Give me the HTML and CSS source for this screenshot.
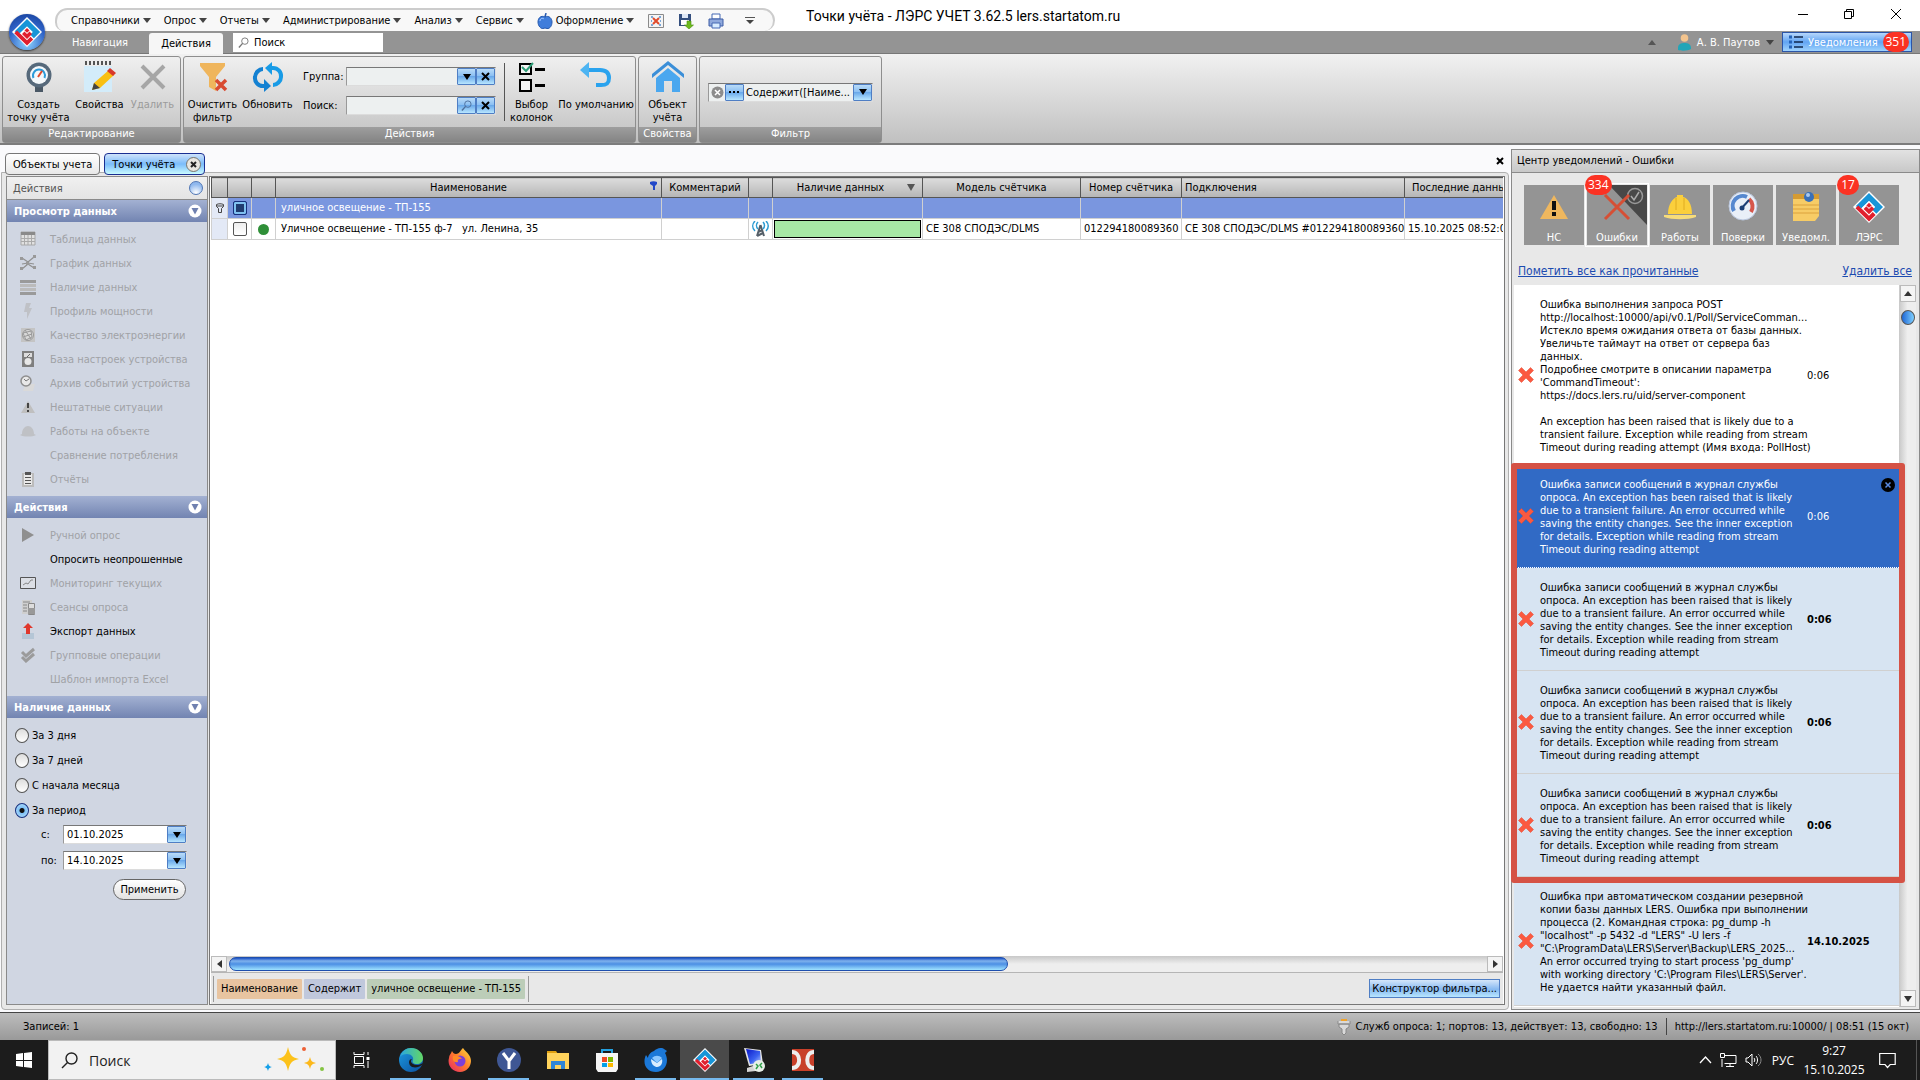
FILE: index.html
```html
<!DOCTYPE html>
<html lang="ru">
<head>
<meta charset="utf-8">
<title>Точки учёта - ЛЭРС УЧЕТ</title>
<link rel="stylesheet" href="styles.css">
</head>
<body>
<svg class="defs" aria-hidden="true">
  <defs>
    <linearGradient id="gEdge" x1="0" y1="0" x2="1" y2="1"><stop offset="0" stop-color="#1c9ae0"/><stop offset="1" stop-color="#0b4f9e"/></linearGradient>
    <linearGradient id="gEdge2" x1="0" y1="0" x2="1" y2="0"><stop offset="0" stop-color="#2aa7e0"/><stop offset="1" stop-color="#63d765"/></linearGradient>
    <linearGradient id="gFox" x1="1" y1="0" x2="0" y2="1"><stop offset="0" stop-color="#ffe03c"/><stop offset=".5" stop-color="#ff7a2c"/><stop offset="1" stop-color="#e8226a"/></linearGradient>
    <linearGradient id="gScreen" x1="0" y1="0" x2="1" y2="1"><stop offset="0" stop-color="#0a18c8"/><stop offset=".6" stop-color="#3b62f0"/><stop offset="1" stop-color="#b9c8ff"/></linearGradient>
  </defs>
  <symbol id="lers" viewBox="0 0 24 24">
    <path d="M12 0 24 12 12 24 0 12z" fill="#fff"/>
    <path d="M12 1.500 22.500 12 17.500 17 14.500 14 16.500 12 12 7.500 6.500 13 2 11.500z" fill="#1795d8"/>
    <path d="M1.800 13 4 10.800 12 18.500 14.800 15.800 17 18 12 22.800z" fill="#e01f2d"/>
    <path d="M6.500 12.800 12 7.500 16.500 12 12 16.800z" fill="#fff"/>
    <path d="M8 13.500 12 17.500 16 13.500 14 11.500 12 13.500 10 11.500z" fill="#e01f2d"/>
    <path d="M12 8.800 14 10.800 12 12.500 10 10.800z" fill="#e01f2d"/>
  </symbol>
  <symbol id="cross" viewBox="0 0 16 16"><path d="M.5 3.500 3.500.500 8 5l4.500-4.500 3 3L11 8l4.500 4.500-3 3L8 11l-4.500 4.500-3-3L5 8z" fill="#fb5940" stroke="#e04a33" stroke-width=".5"/></symbol>
  <symbol id="lens" viewBox="0 0 12 12"><circle cx="7.500" cy="4.500" r="3.500" fill="none" stroke="currentColor"/><path d="M5 7 1 11.500" stroke="currentColor" stroke-width="1.500"/></symbol>
  <symbol id="fold" viewBox="0 0 14 14"><circle cx="7" cy="7" r="6.500" fill="#fff"/><path d="M3.500 4h7L7 10.500z" fill="#6f80b0"/></symbol>
  <symbol id="helmet" viewBox="0 0 32 28"><path d="M4 21C4 11 9 5 13 4V2h6v2c5 1 9 7 9 17z" fill="#fbcf3c"/><path d="M0 22h32v2c-8 3-24 3-32 0z" fill="#f7dc7a"/><path d="M12 5v12M20 5v12" stroke="#e0ac20"/></symbol>
</svg>

<header class="titlebar">
  <span class="orb"><svg width="30" height="30"><use href="#lers"/></svg></span>
  <nav class="quick">
    <button class="menu">Справочники<i class="caret"></i></button>
    <button class="menu">Опрос<i class="caret"></i></button>
    <button class="menu">Отчеты<i class="caret"></i></button>
    <button class="menu">Администрирование<i class="caret"></i></button>
    <button class="menu">Анализ<i class="caret"></i></button>
    <button class="menu">Сервис<i class="caret"></i></button>
    <button class="menu"><svg width="16" height="16" viewBox="0 0 16 16"><path d="M8 4C4 2 1 5 1 9s3 7 5 6.500l2-.5 2 .5c3 .5 5-3 5-6.500S12 2 8 4z" fill="#3f7ddb" stroke="#2458ae"/><path d="M8 4 9 0" stroke="#2458ae" stroke-width="1.500"/><path d="M3 8c0-3 3-3 4-2" stroke="#a9cbff" fill="none"/></svg>Оформление<i class="caret"></i></button>
    <button class="tool" aria-label="Закрыть отчёт"><svg width="16" height="16" viewBox="0 0 16 16"><path d="M.5 1.500h15v13H.5z" fill="#f4f4f4" stroke="#8a8a8a"/><path d="M3 4h2M11 4h2M3 8h1M12 8h1M3 12h2M11 12h2" stroke="#7aa7d8" stroke-width="2"/><path d="m5 5 6 6M11 5l-6 6" stroke="#e04a2c" stroke-width="2"/></svg></button>
    <button class="tool" aria-label="Сохранить"><svg width="16" height="16" viewBox="0 0 16 16"><path d="M1 1h12v12H1z" fill="#35507f"/><path d="M4 1h6v4H4z" fill="#dfe8f5"/><path d="M3 7h8v5H3z" fill="#fff"/><path d="M9 8h4v4h2.500L11 16l-4.500-4H9z" fill="#6cbb1c" stroke="#4b8d0d" stroke-width=".6"/></svg></button>
    <button class="tool" aria-label="Печать"><svg width="16" height="16" viewBox="0 0 16 16"><path d="M4 1h8v5H4z" fill="#fff" stroke="#4468b4"/><path d="M1 6h14v7H1z" fill="#8fa9dc" stroke="#3d5ca5"/><path d="M4 10h8v5H4z" fill="#d8ecff" stroke="#4468b4"/></svg></button>
    <button class="tool more" aria-label="Ещё"><svg width="10" height="8" viewBox="0 0 10 8"><path d="M0 .500h10" stroke="#555"/><path d="M1 3h8L5 7z" fill="#444"/></svg></button>
  </nav>
  <h1 class="caption">Точки учёта - ЛЭРС УЧЕТ 3.62.5 lers.startatom.ru</h1>
  <div class="winbtns">
    <button aria-label="Свернуть"><svg width="10" height="10" viewBox="0 0 10 10"><path d="M0 5.500h10" stroke="#000"/></svg></button>
    <button aria-label="Восстановить"><svg width="10" height="10" viewBox="0 0 10 10"><path d="M.5 2.500h7v7h-7zM2.500 2.500v-2h7v7h-2" fill="none" stroke="#000"/></svg></button>
    <button aria-label="Закрыть"><svg width="10" height="10" viewBox="0 0 10 10"><path d="m0 0 10 10M10 0 0 10" stroke="#000"/></svg></button>
  </div>
</header>

<div class="tabstrip">
  <button class="rtab">Навигация</button>
  <button class="rtab on">Действия</button>
  <label class="find"><svg width="11" height="11"><use href="#lens"/></svg><input type="text" value="Поиск" aria-label="Поиск"></label>
  <div class="account">
    <i class="caret up"></i>
    <button class="user"><svg width="13" height="17" viewBox="0 0 13 17"><circle cx="6.500" cy="4" r="3.800" fill="#f3c48e"/><path d="M0 17v-3c0-4 3-5 6.500-5s6.500 1 6.500 5v1c-3 2-10 2-13 1z" fill="#22a5b8"/></svg>А. В. Паутов<i class="caret"></i></button>
    <button class="notify"><svg width="14" height="14" viewBox="0 0 14 14"><path d="M0 2h3M0 7h3M0 12h3" stroke="#2463b8" stroke-width="3"/><path d="M5 2h9M5 7h9M5 12h9" stroke="#10284e" stroke-width="1.500"/></svg>Уведомления<span class="pill">351</span></button>
  </div>
</div>

<div class="ribbon">
  <section class="rgroup">
    <div class="rbody">
      <button class="rbtn w70"><svg width="32" height="32" viewBox="0 0 32 32"><path d="M4 10h24v8H4z" fill="#4a5866"/><path d="M12 24h8v7h-8z" fill="#4a5866"/><circle cx="16" cy="14" r="12.500" fill="#56697b"/><circle cx="16" cy="14" r="9" fill="#f4f8fb"/><path d="M10.500 17a6 6 0 1 1 11 0" fill="none" stroke="#2d9ad8" stroke-width="2"/><path d="m15 16 4-6" stroke="#e04a2c" stroke-width="2"/></svg><span>Создать<br>точку учёта</span></button>
      <button class="rbtn w53"><svg width="32" height="32" viewBox="0 0 32 32"><path d="M0 5h28v26H0z" fill="#d3ecfa"/><path d="M1 2h26" stroke="#555" stroke-width="4" stroke-dasharray="2 2"/><path d="m8 29 2-7L25 9l5 5-14 13z" fill="#f9c013"/><path d="m8 29 2-7 6 5z" fill="#444"/><path d="m23 10 3-3 6 5-3 3z" fill="#d8392b"/></svg><span>Свойства</span></button>
      <button class="rbtn w53" disabled><svg width="32" height="32" viewBox="0 0 32 32"><path d="m5 5 22 22M27 5 5 27" stroke="#a6a6a6" stroke-width="4"/></svg><span>Удалить</span></button>
    </div>
    <h2>Редактирование</h2>
  </section>
  <section class="rgroup">
    <div class="rbody">
      <button class="rbtn w56"><svg width="32" height="32" viewBox="0 0 32 32"><path d="M3 2h25v3L19 16v14l-7-4V16L3 5z" fill="#efb55c"/><path d="m19 19 10 10M29 19 19 29" stroke="#d94a31" stroke-width="3.500"/></svg><span>Очистить<br>фильтр</span></button>
      <button class="rbtn w56"><svg width="32" height="32" viewBox="0 0 32 32"><path d="M14 25H11a8 8 0 0 1-8-9c0-4 4-8 8-8" fill="none" stroke="#1481d2" stroke-width="4"/><path d="M18 7h3a8 8 0 0 1 8 9c0 4-4 8-8 8" fill="none" stroke="#189be6" stroke-width="4"/><path d="M20 1v13l-7-7z" fill="#189be6"/><path d="M12 18v13l7-6z" fill="#1481d2"/></svg><span>Обновить</span></button>
      <div class="rform">
        <label for="grp">Группа:</label><span class="combo"><input id="grp" type="text"><button class="xp" aria-label="Открыть"><i class="tri"></i></button><button class="xp" aria-label="Очистить"><svg width="9" height="9" viewBox="0 0 9 9"><path d="m1 1 7 7M8 1 1 8" stroke="#000" stroke-width="2"/></svg></button></span>
        <label for="srch">Поиск:</label><span class="combo"><input id="srch" type="text"><button class="xp" aria-label="Найти"><svg width="11" height="11"><use href="#lens"/></svg></button><button class="xp" aria-label="Очистить"><svg width="9" height="9" viewBox="0 0 9 9"><path d="m1 1 7 7M8 1 1 8" stroke="#000" stroke-width="2"/></svg></button></span>
      </div>
      <i class="vline"></i>
      <button class="rbtn w53"><svg width="32" height="32" viewBox="0 0 32 32"><path d="M4 3h11v10H4zM4 19h11v11H4z" fill="#f4f4f4" stroke="#000" stroke-width="2"/><path d="M19 7h10v3H19zM19 23h10v3H19z"/><path d="m6 6 4 4 7-8" fill="none" stroke="#2f9e78" stroke-width="2"/></svg><span>Выбор<br>колонок</span></button>
      <button class="rbtn w76"><svg width="32" height="32" viewBox="0 0 32 32"><path d="M6 9h14c5 0 9 2 9 8s-3 7-8 7h-5" fill="none" stroke="#2aa3ee" stroke-width="4"/><path d="M9 1v16L0 9z" fill="#4db4f2"/></svg><span>По умолчанию</span></button>
    </div>
    <h2>Действия</h2>
  </section>
  <section class="rgroup">
    <div class="rbody">
      <button class="rbtn w56"><svg width="34" height="32" viewBox="0 0 34 32"><path d="M1 17v-4L17 0l16 13v4L17 4z" fill="#3b8fd8"/><path d="M5 17 17 7l12 10v14h-8V20h-8v11H5z" fill="#4aa7ef"/></svg><span>Объект<br>учёта</span></button>
    </div>
    <h2>Свойства</h2>
  </section>
  <section class="rgroup filter">
    <div class="rbody">
      <span class="combo expr"><svg width="13" height="13" viewBox="0 0 13 13"><circle cx="6.500" cy="6.500" r="6" fill="#8c8c8c"/><path d="m4 4 5 5M9 4 4 9" stroke="#fff" stroke-width="1.500"/></svg><button class="xp" aria-label="Изменить"><svg width="11" height="2" viewBox="0 0 11 2"><path d="M0 1h2M4 1h2M8 1h2" stroke="#000" stroke-width="2"/></svg></button><input type="text" value="Содержит([Наиме..." aria-label="Фильтр"><button class="xp" aria-label="Открыть"><i class="tri"></i></button></span>
    </div>
    <h2>Фильтр</h2>
  </section>
</div>

<main class="work">
  <div class="docs">
    <div class="doctabs">
      <button class="dtab">Объекты учета</button>
      <button class="dtab on">Точки учёта<svg width="15" height="15" viewBox="0 0 15 15"><circle cx="7.500" cy="7.500" r="7" fill="#e8e6e0" stroke="#77756c"/><path d="m5 5 5 5M10 5l-5 5" stroke="#222" stroke-width="2"/></svg></button>
      <button class="closeall" aria-label="Закрыть"><svg width="8" height="8" viewBox="0 0 8 8"><path d="m1 1 6 6M7 1 1 7" stroke="#000" stroke-width="2"/></svg></button>
    </div>
    <div class="docbody">
      <aside class="side">
        <div class="sidehead">Действия<i class="ball"></i></div>
        <h3>Просмотр данных<svg width="14" height="14"><use href="#fold"/></svg></h3>
        <ul class="acts">
          <li><button disabled><svg viewBox="0 0 16 16"><path d="M1 1h14v13H1z" fill="#e0e0e0" stroke="#a8a8a8"/><path d="M1 2.500h14" stroke="#8a8a8a" stroke-width="3"/><path d="M4.500 4v10M8 4v10M11.500 4v10M1 7.500h14M1 10.500h14" stroke="#aaa"/></svg>Таблица данных</button></li>
          <li><button disabled><svg viewBox="0 0 16 16"><path d="m2 3 6 4 6-5M2 14l6-5 6 4M2 9l6-1 6 1" fill="none" stroke="#909090" stroke-width="1.200"/><path d="M0 2h3v3H0zM13 0h3v3h-3zM0 12h3v3H0zM13 11h3v3h-3zM6 7h3v3H6z" fill="#999"/></svg>График данных</button></li>
          <li><button disabled><svg viewBox="0 0 16 16"><path d="M0 1h16v3H0zM0 13h16v3H0z" fill="#9a9a9a"/><path d="M0 5h16v3H0zM0 9h16v3H0z" fill="#bbb"/></svg>Наличие данных</button></li>
          <li><button disabled><svg viewBox="0 0 16 16"><path d="M6 0h5L9 5h3L7 16V9H4z" fill="#bfc1c6"/></svg>Профиль мощности</button></li>
          <li><button disabled><svg viewBox="0 0 16 16"><path d="M1 1h14v14H1z" fill="#c4c4c4"/><circle cx="8" cy="8" r="5.500" fill="#d8d8d8" stroke="#999"/><path d="m3 6 8-2 1 6-6 3zM5 3l6 9M3 10l9-3" fill="none" stroke="#999"/></svg>Качество электроэнергии</button></li>
          <li><button disabled><svg viewBox="0 0 16 16"><path d="M2 0h12v16H2z" fill="#7f7f7f"/><path d="M4 2h8v4H4z" fill="#ddd"/><circle cx="8" cy="10.500" r="3.500" fill="#e8e8e8"/><path d="m7 6 3-3" stroke="#666"/></svg>База настроек устройства</button></li>
          <li><button disabled><svg viewBox="0 0 16 16"><path d="M5 9h10l-2 7H3z" fill="#d9d9d9"/><circle cx="6" cy="6" r="5" fill="#e8e8e8" stroke="#8e8e8e" stroke-width="1.500"/><path d="m4 4 2 2 3-2" fill="none" stroke="#777"/></svg>Архив событий устройства</button></li>
          <li><button disabled><svg viewBox="0 0 16 16"><path d="m8 2 7 12H1z" fill="#bfbfbf"/><path d="M8 4v5M8 11v2" stroke="#444" stroke-width="2"/></svg>Нештатные ситуации</button></li>
          <li><button disabled><svg viewBox="0 0 16 16"><path d="M2 11c0-5 3-8 6-8s6 3 6 8l2 1c-4 2-12 2-16 0z" fill="#bfc1c5"/></svg>Работы на объекте</button></li>
          <li><button disabled><svg viewBox="0 0 16 16"></svg>Сравнение потребления</button></li>
          <li><button disabled><svg viewBox="0 0 16 16"><path d="M2 2h12v14H2z" fill="#bbb"/><path d="M4 3h8v11H4z" fill="#e8e8e8"/><path d="M5 1h6v3H5zM5 6h6v1H5zM5 9h6v1H5zM5 12h6v1H5z" fill="#555"/></svg>Отчёты</button></li>
        </ul>
        <h3>Действия<svg width="14" height="14"><use href="#fold"/></svg></h3>
        <ul class="acts">
          <li><button disabled><svg viewBox="0 0 16 16"><path d="m2 1 12 7-12 7z" fill="#8f8f8f"/></svg>Ручной опрос</button></li>
          <li><button><svg viewBox="0 0 16 16"></svg>Опросить неопрошенные</button></li>
          <li><button disabled><svg viewBox="0 0 16 16"><path d="M.5 2.500h15v11H.5z" fill="#dcdfe5" stroke="#555"/><path d="m3 10 3-2 2 1 3-4h2" fill="none" stroke="#888"/></svg>Мониторинг текущих</button></li>
          <li><button disabled><svg viewBox="0 0 16 16"><path d="M2 1h10v14H2z" fill="#cfcfcf"/><path d="M3 3h7M3 6h4M3 9h4M3 12h4" stroke="#888"/><path d="M8.500 4.500h6v11h-6z" fill="#ddd" stroke="#888"/><path d="M8 9h7v6H8z" fill="#999"/></svg>Сеансы опроса</button></li>
          <li><button><svg viewBox="0 0 16 16"><path d="M2 10h12v6H2z" fill="#b5c6d6"/><path d="m8 0 5 5h-3v6H6V5H3z" fill="#e0382d"/></svg>Экспорт данных</button></li>
          <li><button disabled><svg viewBox="0 0 16 16"><path d="m2 5 4 4 8-7M2 10l4 4 8-7" fill="none" stroke="#9b9b9b" stroke-width="3"/></svg>Групповые операции</button></li>
          <li><button disabled><svg viewBox="0 0 16 16"></svg>Шаблон импорта Excel</button></li>
        </ul>
        <h3>Наличие данных<svg width="14" height="14"><use href="#fold"/></svg></h3>
        <form class="period">
          <label><input type="radio" name="p">За 3 дня</label>
          <label><input type="radio" name="p">За 7 дней</label>
          <label><input type="radio" name="p">С начала месяца</label>
          <label><input type="radio" name="p" checked>За период</label>
          <div class="dates">
            <label for="d1">с:</label><span class="combo"><input id="d1" type="text" value="01.10.2025"><button type="button" class="xp" aria-label="Календарь"><i class="tri"></i></button></span>
            <label for="d2">по:</label><span class="combo"><input id="d2" type="text" value="14.10.2025"><button type="button" class="xp" aria-label="Календарь"><i class="tri"></i></button></span>
          </div>
          <button type="button" class="apply">Применить</button>
        </form>
      </aside>

      <section class="gridpane">
        <div class="gridwrap">
          <table>
            <colgroup><col class="c16"><col class="c24"><col class="c24"><col class="c386"><col class="c87"><col class="c24"><col class="c150"><col class="c158"><col class="c101"><col class="c223"><col class="c120"></colgroup>
            <thead><tr><th></th><th></th><th></th>
              <th><span class="hd">Наименование<svg width="7" height="9" viewBox="0 0 7 9"><path d="M0 1c2-1 5-1 7 0v2L5 5v4H3V5L0 3z" fill="#2348c8"/></svg></span></th>
              <th>Комментарий</th><th></th>
              <th><span class="hd shift">Наличие данных<i class="sort"></i></span></th>
              <th>Модель счётчика</th><th>Номер счётчика</th><th class="left">Подключения</th><th class="left wide">Последние данные</th></tr></thead>
            <tbody>
              <tr class="flt"><td class="ind"><svg width="8" height="10" viewBox="0 0 8 10"><path d="M.5 1.500c2-1 5-1 7 0v2l-2 2v4h-3v-4l-2-2zM.5 3h7" fill="none" stroke="#444"/></svg></td><td class="mid"><input type="checkbox" class="mixed" aria-label="Все"></td><td></td><td>уличное освещение - ТП-155</td><td></td><td></td><td></td><td></td><td></td><td></td><td></td></tr>
              <tr><td class="ind"></td><td class="mid"><input type="checkbox" aria-label="Строка 1"></td><td class="mid"><i class="dot"></i></td><td>Уличное освещение - ТП-155 ф-7 &nbsp; ул. Ленина, 35</td><td></td>
                <td class="mid"><svg width="17" height="16" viewBox="0 0 17 16"><path d="M8.500 4 5 15M8.500 4 12 15M6 11l5-2M5 15l6-3" fill="none" stroke="#555f68" stroke-width="2"/><path d="M6 1c-2 2-2 5 0 7M11 1c2 2 2 5 0 7M3 0C0 3 0 7 3 10M14 0c3 3 3 7 0 10" fill="none" stroke="#2d9bd2" stroke-width="1.500"/></svg></td>
                <td class="bar"><i></i></td><td class="tight">СЕ 308 СПОДЭС/DLMS</td><td class="tight">012294180089360</td><td class="tight">СЕ 308 СПОДЭС/DLMS #012294180089360</td><td class="tight">15.10.2025 08:52:00</td></tr>
            </tbody>
          </table>
        </div>
        <div class="hscroll"><button aria-label="Влево"><i class="al"></i></button><div class="track"><i class="thumb"></i></div><button aria-label="Вправо"><i class="ar"></i></button></div>
        <div class="filterbar">
          <div class="chips"><span class="chip a">Наименование</span><span class="chip b">Содержит</span><span class="chip c">уличное освещение - ТП-155</span></div>
          <button class="builder">Конструктор фильтра...</button>
        </div>
      </section>
    </div>
  </div>

  <aside class="center">
    <h2 class="chead">Центр уведомлений - Ошибки</h2>
    <div class="tiles">
      <button class="tile"><svg width="30" height="32" viewBox="0 0 30 32"><path d="m15 4 14 24H1z" fill="#efb75e"/><path d="M15 10v9M15 21v4" stroke="#111" stroke-width="4"/></svg>НС</button>
      <button class="tile on"><svg class="corner" width="38" height="40" viewBox="0 0 38 40"><path d="M0 0h38v40z" fill="#484848"/><circle cx="26" cy="11" r="7.500" fill="none" stroke="#999" stroke-width="1.500"/><path d="m22 11 3 4 5-8" fill="none" stroke="#aaa" stroke-width="1.500"/></svg><svg width="30" height="32" viewBox="0 0 30 32"><path d="m3 4 24 24M27 4 3 28" stroke="#d64f35" stroke-width="3"/></svg>Ошибки<span class="pill">334</span></button>
      <button class="tile"><svg width="32" height="32" viewBox="0 0 32 28"><use href="#helmet" width="32" height="28"/></svg>Работы</button>
      <button class="tile"><svg width="30" height="32" viewBox="0 0 30 32"><circle cx="15" cy="15" r="14" fill="#e9eff8" stroke="#b9c6de"/><path d="M6 20a10 10 0 0 1 13-14" fill="none" stroke="#5688cf" stroke-width="4"/><path d="M21 8a10 10 0 0 1 2 13" fill="none" stroke="#d6564b" stroke-width="4"/><path d="m13 18 8-9" stroke="#1d3f76" stroke-width="2"/><circle cx="14" cy="17" r="2.500" fill="#1d3f76"/></svg>Поверки</button>
      <button class="tile"><svg width="30" height="32" viewBox="0 0 30 32"><path d="M2 3h26v22l-4 5H2z" fill="#f7cc66"/><path d="M2 3h26v5H2z" fill="#d49b33"/><path d="M2 14h26M2 18h26M2 22h26" stroke="#dca23c"/><circle cx="18" cy="6" r="5" fill="#3a70b8"/><circle cx="17" cy="4" r="2" fill="#a9c9ee"/></svg>Уведомл.</button>
      <button class="tile"><svg width="32" height="32"><use href="#lers"/></svg>ЛЭРС<span class="pill">17</span></button>
    </div>
    <div class="links"><a href="#read">Пометить все как прочитанные</a><a href="#del">Удалить все</a></div>
    <div class="feed">
      <div class="msgs">
        <article class="msg read"><svg width="16" height="16"><use href="#cross"/></svg><p>Ошибка выполнения запроса POST<br>http://localhost:10000/api/v0.1/Poll/ServiceComman...<br>Истекло время ожидания ответа от базы данных.<br>Увеличьте таймаут на ответ от сервера баз<br>данных.<br>Подробнее смотрите в описании параметра<br>'CommandTimeout':<br>https://docs.lers.ru/uid/server-component<br><br>An exception has been raised that is likely due to a<br>transient failure. Exception while reading from stream<br>Timeout during reading attempt (Имя входа: PollHost)</p><time>0:06</time></article>
        <div class="marked">
          <article class="msg sel"><svg width="16" height="16"><use href="#cross"/></svg><p>Ошибка записи сообщений в журнал службы<br>опроса. An exception has been raised that is likely<br>due to a transient failure. An error occurred while<br>saving the entity changes. See the inner exception<br>for details. Exception while reading from stream<br>Timeout during reading attempt</p><time>0:06</time><button class="dismiss" aria-label="Удалить"><svg width="14" height="14" viewBox="0 0 14 14"><circle cx="7" cy="7" r="7"/><path d="m4.500 4.500 5 5M9.500 4.500l-5 5" stroke="#5a8ae0" stroke-width="1.500"/></svg></button></article>
          <article class="msg"><svg width="16" height="16"><use href="#cross"/></svg><p>Ошибка записи сообщений в журнал службы<br>опроса. An exception has been raised that is likely<br>due to a transient failure. An error occurred while<br>saving the entity changes. See the inner exception<br>for details. Exception while reading from stream<br>Timeout during reading attempt</p><time>0:06</time></article>
          <article class="msg"><svg width="16" height="16"><use href="#cross"/></svg><p>Ошибка записи сообщений в журнал службы<br>опроса. An exception has been raised that is likely<br>due to a transient failure. An error occurred while<br>saving the entity changes. See the inner exception<br>for details. Exception while reading from stream<br>Timeout during reading attempt</p><time>0:06</time></article>
          <article class="msg"><svg width="16" height="16"><use href="#cross"/></svg><p>Ошибка записи сообщений в журнал службы<br>опроса. An exception has been raised that is likely<br>due to a transient failure. An error occurred while<br>saving the entity changes. See the inner exception<br>for details. Exception while reading from stream<br>Timeout during reading attempt</p><time>0:06</time></article>
        </div>
        <article class="msg last"><svg width="16" height="16"><use href="#cross"/></svg><p>Ошибка при автоматическом создании резервной<br>копии базы данных LERS. Ошибка при выполнении<br>процесса (2. Командная строка: pg_dump -h<br>"localhost" -p 5432 -d "LERS" -U lers -f<br>"C:\ProgramData\LERS\Server\Backup\LERS_2025...<br>An error occurred trying to start process 'pg_dump'<br>with working directory 'C:\Program Files\LERS\Server'.<br>Не удается найти указанный файл.</p><time>14.10.2025</time></article>
      </div>
      <div class="vscroll"><button aria-label="Вверх"><i class="au"></i></button><i class="knob"></i><button class="down" aria-label="Вниз"><i class="ad"></i></button></div>
    </div>
  </aside>
</main>

<footer class="status">
  <span>Записей: 1</span>
  <span class="svc"><svg width="14" height="16" viewBox="0 0 14 16"><path d="M4 0h6v3H4z" fill="#f0a32c"/><path d="M1 2v3h12V2M2 5h10v3l-3 2v4l-2 2-2-2v-4L2 8z" fill="#d9d9d9" stroke="#888"/></svg>Служб опроса: 1; портов: 13, действует: 13, свободно: 13</span>
  <span class="host">http://lers.startatom.ru:10000/ | 08:51 (15 окт)</span>
</footer>

<nav class="taskbar">
  <button class="start" aria-label="Пуск"><svg width="16" height="16" viewBox="0 0 16 16"><path d="m0 2 7-1v7H0zM8 1l8-1v8H8zM0 9h7v6l-7-1zM8 9h8v7l-8-1z" fill="#fff"/></svg></button>
  <label class="tsearch"><svg width="17" height="17" viewBox="0 0 17 17"><circle cx="10.500" cy="6.500" r="5.500" fill="none" stroke="#222" stroke-width="1.400"/><path d="M6.500 10.500 1 16" stroke="#222" stroke-width="1.400"/></svg><input type="text" value="Поиск" aria-label="Поиск в Windows"><svg width="62" height="26" viewBox="0 0 62 26"><path d="M24 0c2 8 3 10 11 12-8 2-9 4-11 12-2-8-3-10-11-12 8-2 9-4 11-12z" fill="#fcc21b"/><path d="M46 10c1 4 2 5 6 6-4 1-5 2-6 6-1-4-2-5-6-6 4-1 5-2 6-6z" fill="#fcb81b"/><path d="M4 16c1 3 1 3 4 4-3 1-3 1-4 4-1-3-1-3-4-4 3-1 3-1 4-4z" fill="#16a0e8"/><circle cx="40" cy="2" r="2" fill="#ee6035"/><circle cx="58" cy="22" r="2" fill="#84c442"/></svg></label>
  <div class="apps">
    <button class="app" aria-label="Представление задач"><svg width="17" height="16" viewBox="0 0 17 16"><path d="M1 0v2.500h10V0M1 16v-2.500h10V16M1.500 4.500h9v7h-9zM15 0v3M15 9v7" fill="none" stroke="#fff"/><path d="M13.500 5h3v3h-3z" fill="#fff"/></svg></button>
    <button class="app run" aria-label="Edge"><svg width="24" height="24" viewBox="0 0 24 24"><circle cx="12" cy="12" r="12" fill="url(#gEdge)"/><path d="M1 9C3 3 7 0 12 0c7 0 12 5 12 10 0 4-3 6-6 6-4 0-5-2-4-4 1-3-2-6-6-6-3 0-6 1-7 3z" fill="url(#gEdge2)"/><path d="M24 15c-3 2-7 3-10 1-3-2-2-4-1-5-4 0-4 6 0 8 4 1 7 0 10-2z" fill="#1b1b1b"/></svg></button>
    <button class="app" aria-label="Firefox"><svg width="24" height="24" viewBox="0 0 24 24"><path d="M4 3c1 2 2 3 4 3 3 0 4-3 7-6 2 3 4 4 6 7 5 7 0 17-9 17C4 24-1 17 1 10c0-3 2-4 3-7z" fill="url(#gFox)"/><circle cx="12" cy="13" r="5.500" fill="#7d3fd8"/><path d="M5 8c4-1 8 1 9 3-3-1-5 1-4 3-4 1-6-2-5-6z" fill="#ff8a26"/></svg></button>
    <button class="app run" aria-label="Яндекс"><svg width="24" height="24" viewBox="0 0 24 24"><circle cx="12" cy="12" r="12" fill="#3f5794"/><path d="m6 5 6 8 6-8M12 12v9" fill="none" stroke="#fff" stroke-width="3"/></svg></button>
    <button class="app" aria-label="Проводник"><svg width="24" height="24" viewBox="0 0 24 24"><path d="M1 3h9l2 3H1z" fill="#e0a010"/><path d="M1 5h22v16H1z" fill="#ffd35c"/><path d="M5 13h14v8h-4v-4H9v4H5z" fill="#2f86d6"/></svg></button>
    <button class="app" aria-label="Store"><svg width="24" height="24" viewBox="0 0 24 24"><path d="M7 7V2h10v5" fill="none" stroke="#24a1e0" stroke-width="2"/><path d="M1 5h22v16l-2 3H3l-2-3z" fill="#f5f5f5"/><path d="M7 9h5v5H7z" fill="#ee4a24"/><path d="M13 9h5v5h-5z" fill="#7fb900"/><path d="M7 15h5v4H7z" fill="#00a0ea"/><path d="M13 15h5v4h-5z" fill="#fcb700"/></svg></button>
    <button class="app run" aria-label="Thunderbird"><svg width="24" height="24" viewBox="0 0 24 24"><path d="M10 3c3-3 8-4 10-2l3 2-2 2c5 9 0 19-9 19C2 24-2 15 2 7l2 3c0-3 3-6 6-7z" fill="#1b78d8"/><path d="M7 11c0 6 4 8 6 8 4 0 6-4 5-8l-5 4z" fill="#d9edff"/><path d="M8 10c3-3 7-3 10 0l-5 5z" fill="#8cc8ff"/></svg></button>
    <button class="app run active" aria-label="ЛЭРС"><svg width="24" height="24"><use href="#lers"/></svg></button>
    <button class="app run" aria-label="Удалённый рабочий стол"><svg width="24" height="24" viewBox="0 0 24 24"><path d="m2 0 17 2 2 14-14 2z" fill="#e4e4e4"/><path d="m4 1 14 2 1 12-11 1z" fill="url(#gScreen)"/><path d="m5 20 9-3v6l-9 1z" fill="#d4d4d4"/><circle cx="17" cy="18" r="6" fill="#e8efe8"/><path d="m14 16 2 2-2 3M20 15l-2 2 2 3" fill="none" stroke="#2f9f48" stroke-width="1.500"/></svg></button>
    <button class="app run" aria-label="DC"><svg width="24" height="24" viewBox="0 0 24 24"><path d="M1 1h22v22H1z" fill="#c8402a"/><path d="M1 4c9 0 10 16 0 16M23 4c-9 0-9 16 0 16" fill="none" stroke="#eee" stroke-width="4"/></svg></button>
  </div>
  <div class="tray">
    <svg width="13" height="8" viewBox="0 0 13 8"><path d="m1 7 5.500-6L12 7" fill="none" stroke="#fff" stroke-width="1.300"/></svg>
    <svg width="17" height="14" viewBox="0 0 17 14"><path d="M4 2.500h12v8H4.500M10 11v2M6 13.500h8M2 6v8" fill="none" stroke="#fff"/><path d="M.5.500h4v4h-4z" fill="#1c1c1c" stroke="#fff"/></svg>
    <svg width="17" height="14" viewBox="0 0 17 14"><path d="M1 5h2l4-4v12L3 9H1z" fill="none" stroke="#fff"/><path d="M9 5c1 1 1 3 0 4M11 3c2 2 2 6 0 8" fill="none" stroke="#fff"/><path d="M13 1c4 3 4 9 0 12" fill="none" stroke="#888"/></svg>
    <span class="lang">РУС</span>
    <span class="clock">9:27<br>15.10.2025</span>
    <svg width="17" height="17" viewBox="0 0 17 17"><path d="M.7 1.500h15.500v11h-5L8.500 15.500 6 12.500H.7z" fill="none" stroke="#fff" stroke-width="1.200"/></svg>
    <i class="peek"></i>
  </div>
</nav>
</body>
</html>
```
FILE: styles.css
```css
* { box-sizing: border-box; }
html, body { margin: 0; }
body {
  display: flex; flex-direction: column; min-height: 100vh;
  font: 11px/13px "DejaVu Sans Condensed", "DejaVu Sans", sans-serif;
  color: #000; background: #fafafc; overflow: hidden;
}
button, input { font: inherit; color: inherit; margin: 0; }
button { border: 0; padding: 0; background: none; white-space: nowrap; }
h1, h2, h3, p, ul { margin: 0; padding: 0; font-weight: normal; font-size: inherit; }
ul { list-style: none; }
svg { display: block; flex: none; }
.defs { position: absolute; width: 0; height: 0; }
.caret { display: inline-block; border: 4px solid transparent; border-top: 5px solid #444; border-bottom: 0; }
.caret.up { border-top: 0; border-bottom: 5px solid #555; }
.tri { border: 4px solid transparent; border-top: 6px solid #000; border-bottom: 0; }

/* title bar */
.titlebar { position: relative; display: flex; height: 31px; background: #fff; }
.orb {
  position: absolute; left: 9px; top: 14px; z-index: 2; width: 36px; height: 36px; border-radius: 50%;
  display: flex; align-items: center; justify-content: center;
  background: radial-gradient(circle at 50% 80%, #8fd6ff, #2f63c8 55%, #123a92);
  box-shadow: 0 1px 2px #333;
}
.quick {
  display: flex; align-items: center; gap: 13px; height: 23px; width: 720px;
  margin: 8px 0 0 55px; padding-left: 14px;
  border: 2px solid #ccc; border-bottom: 0; border-radius: 14px 14px 12px 10px; background: #f8f8f8;
}
.menu { display: flex; align-items: center; gap: 3px; }
.tool { margin-left: 1px; }
.tool.more { margin-left: 8px; }
.caption { margin-left: 31px; font: 14px/32px Roboto, sans-serif; white-space: nowrap; }
.winbtns { display: flex; margin-left: auto; }
.winbtns button { width: 46px; display: flex; justify-content: center; padding-top: 9px; }
.winbtns button:last-child { width: 48px; }

/* ribbon tabs */
.tabstrip { display: flex; height: 23px; padding-left: 51px; background: #949494; border-bottom: 1px solid #777; }
.rtab { width: 98px; color: #fff; }
.rtab.on { width: 74px; margin: 2px 0 -1px; color: #000; background: #f6f6f6; border-radius: 3px 3px 0 0; }
.find { display: flex; align-items: center; width: 150px; height: 19px; margin: 2px 0 0 10px; padding: 0 5px; gap: 5px; background: #fff; color: #777; }
.find input { border: 0; padding: 0; width: 100px; background: none; color: #000; }
.account { display: flex; align-items: center; margin-left: auto; padding-right: 8px; color: #fff; }
.user { display: flex; align-items: center; gap: 6px; margin: 0 8px 0 22px; }
.notify {
  display: flex; align-items: center; gap: 5px; height: 20px; width: 130px; padding: 0 2px 0 6px;
  border: 1px solid #2b55a8; background: linear-gradient(#b7d7fb, #62a5f3 50%, #9fd3fd);
}
.pill {
  display: flex; align-items: center; justify-content: center; min-width: 22px; height: 20px; padding: 0 3px;
  border-radius: 10px; background: #fb3223; color: #fff; font: 12px/14px "Open Sans", sans-serif;
}
.notify .pill { margin-left: auto; }

/* ribbon */
.ribbon { display: flex; gap: 2px; height: 91px; padding: 2px; background: linear-gradient(#f1f1f1, #d9d9d9 50%, #c0c0c0); border-bottom: 2px solid #7c7c7c; }
.rgroup { display: flex; flex-direction: column; height: 87px; border: 1px solid #8e8e8e; border-radius: 3px; }
.rgroup h2 { height: 15px; line-height: 14px; text-align: center; color: #fff; background: linear-gradient(#9e9e9e, #848484); }
.rbody { display: flex; flex: 1; padding: 4px 1px 0; }
.rbtn { display: flex; flex-direction: column; align-items: center; gap: 5px; height: 64px; text-align: center; }
.rbtn:disabled { color: #9b9b9b; }
.w53 { width: 53px; } .w56 { width: 55px; } .w70 { width: 69px; } .w76 { width: 76px; }
.rform { display: grid; grid-template-columns: 43px 150px; row-gap: 10px; align-content: start; align-items: center; padding: 6px 8px 0; }
.combo { display: flex; align-items: center; height: 19px; border: 1px solid #dcdcdc; border-top-color: #777; border-left-color: #999; background: #edf0f0; }
.combo input { flex: 1; min-width: 0; height: 100%; border: 0; padding: 0 3px; background: none; }
.xp {
  display: flex; align-items: center; justify-content: center; flex: none; width: 19px; height: 17px;
  border: 1px solid #4f7ec4; border-radius: 1px; background: linear-gradient(#b9dbf8, #8cc0f3 45%, #6aa9ea 50%, #b8e6ff); color: #4d6f9c;
}
.vline { width: 1px; height: 58px; margin: 2px 0 0; background: #555; }
.filter { width: 183px; }
.filter .rbody { align-items: center; padding: 0 8px; }
.expr { flex: 1; min-width: 0; gap: 1px; padding-left: 2px; }
.expr input { padding: 0 1px; }

/* work area */
.work { display: flex; flex: 1; padding: 4px 0 2px 1px; gap: 2px; }
.docs { flex: 1; min-width: 0; display: flex; flex-direction: column; }
.doctabs { display: flex; gap: 4px; height: 27px; padding: 4px 4px 0; position: relative; z-index: 1; }
.dtab { height: 22px; padding: 0 7px; border: 1px solid #777; border-radius: 4px; background: linear-gradient(#fff, #e8e8e8); }
.dtab.on { display: flex; align-items: center; gap: 11px; padding: 0 3px 0 7px; border-color: #1a2f92; background: linear-gradient(#cfe3fb, #7bbcfa 50%, #c9fbff); }
.closeall { margin-left: auto; padding: 0 1px 8px; }
.docbody { display: flex; flex: 1; margin-top: -4px; padding: 3px 3px 4px 4px; gap: 1px; border: 1px solid #b0b0b0; border-radius: 0 4px 4px 4px; background: #e8e8e8; }
.side { width: 202px; border: 1px solid #8a8a8a; background: #d0d6e2; }
.sidehead { display: flex; align-items: center; justify-content: space-between; height: 23px; padding: 0 4px 0 6px; color: #555; border-bottom: 1px solid #8a8a8a; background: linear-gradient(#f0f0f0, #e4e4e4); }
.ball { width: 14px; height: 14px; border: 1px solid #5076b4; border-radius: 50%; background: radial-gradient(circle at 50% 90%, #fff, #8fb8ee 70%); }
.side h3 { display: flex; align-items: center; justify-content: space-between; height: 22px; padding: 0 5px 0 7px; font-weight: bold; color: #fff; background: linear-gradient(#a3b1d2, #7284b1); }
.acts { padding: 5px 0; }
.acts button { display: flex; align-items: center; gap: 14px; height: 24px; padding-left: 13px; }
.acts svg { width: 16px; height: 16px; }
.acts button:disabled { color: #a0a2a6; }
.period { display: flex; flex-direction: column; padding: 5px 21px 0 8px; }
.period > label { display: flex; align-items: center; gap: 3px; height: 25px; }
input[type=radio] { appearance: none; width: 14px; height: 15px; border: 1px solid #555; border-radius: 50%; background: linear-gradient(#ddd, #fff); }
input[type=radio]:checked { border-color: #17307e; background: radial-gradient(circle, #111 2px, #7fc0f5 3px, #bfe8ff); }
.dates { display: grid; grid-template-columns: 22px 124px; row-gap: 7px; align-items: center; padding: 2px 0 0 26px; }
.dates .combo { background: #fff; }
.apply { align-self: flex-end; width: 73px; height: 21px; margin-top: 9px; border: 1px solid #666; border-radius: 11px; background: linear-gradient(#fff, #e2e2e2); }

/* data grid */
.gridpane { flex: 1; min-width: 0; display: flex; flex-direction: column; border: 1px solid #777; background: #fff; padding: 0 1px; }
.gridwrap { flex: 1; overflow: hidden; }
table { table-layout: fixed; width: 1313px; border-collapse: collapse; }
.c16 { width: 16px; } .c24 { width: 24px; } .c386 { width: 386px; } .c87 { width: 87px; } .c150 { width: 150px; }
.c158 { width: 158px; } .c101 { width: 101px; } .c223 { width: 223px; } .c120 { width: 120px; }
th { height: 20px; padding: 0 3px 1px; font-weight: normal; white-space: nowrap; border: 1px solid #555; background: linear-gradient(#dcdcdc, #b5b5b5); }
th.left { text-align: left; } th.wide { padding-left: 7px; }
.hd { display: flex; justify-content: center; position: relative; }
.hd.shift { padding-right: 14px; }
.hd svg, .sort { position: absolute; right: 1px; top: 0; }
.sort { top: 3px; right: 4px; border: 4px solid transparent; border-top: 7px solid #555; border-bottom: 0; }
td { height: 21px; padding: 0 5px 1px; border: 1px solid #d0d0d0; white-space: nowrap; }
td.tight { padding: 0 3px 1px; }
td.mid, td.ind { padding: 0; }
td.mid > *, td.ind > * { display: block; margin: 0 auto; }
td.ind { background: #e3e9f6; }
.flt td { color: #fff; background: #7a96df; }
.flt td.ind { background: #e3e9f6; }
input[type=checkbox] { appearance: none; width: 14px; height: 14px; border: 1px solid #555; border-radius: 2px; background: linear-gradient(#eee, #fff); }
input[type=checkbox].mixed { border-color: #17307e; background: #1f3a70; box-shadow: inset 0 0 0 2px #7fc0f0; }
.dot { width: 11px; height: 11px; border-radius: 50%; background: #2f8f38; }
td.bar { padding: 1px; }
.bar i { display: block; height: 18px; border: 1px solid #000; background: #a7e8a5; }
.hscroll { display: flex; height: 17px; background: linear-gradient(#c8c8c8, #eee 50%); border-bottom: 1px solid #b5b5b5; }
.hscroll button { display: flex; align-items: center; justify-content: center; width: 16px; border: 1px solid #bbb; background: #f4f4f4; }
.al { border: 4px solid transparent; border-right: 5px solid #333; border-left: 0; }
.ar { border: 4px solid transparent; border-left: 5px solid #333; border-right: 0; }
.au { border: 4px solid transparent; border-bottom: 5px solid #333; border-top: 0; }
.ad { border: 4px solid transparent; border-top: 6px solid #333; border-bottom: 0; }
.track { flex: 1; padding: 1px 2px; }
.thumb { display: block; width: 62%; height: 14px; border: 1px solid #1e4fae; border-radius: 7px; background: linear-gradient(#1c50c4, #7fb2ec 25%, #4c8fe4 50%, #9fe4ff); }
.filterbar { display: flex; align-items: center; justify-content: space-between; height: 31px; padding: 0 3px 0 2px; background: #e8e8e8; }
.chips { position: relative; display: flex; gap: 2px; padding: 3px; border: solid #999; border-width: 0 1px; }
.chip { padding: 3px 4px 4px; border-radius: 1px; }
.chip.a { background: #e8c4a0; } .chip.b { background: #c0c8dc; } .chip.c { background: #bccdb8; }
.builder { height: 19px; padding: 0 2px; border: 1px solid #4f7ec4; background: linear-gradient(#d5e6fa, #86b9f1 55%, #b8e6ff); }

/* notification centre */
.center { width: 409px; display: flex; flex-direction: column; border: 1px solid #8a8a8a; background: #e8e8e8; }
.chead { height: 23px; padding-left: 5px; line-height: 22px; border-bottom: 1px solid #8a8a8a; background: linear-gradient(#e2e2e2, #c8c8c8); }
.tiles { display: flex; gap: 3px; padding: 12px 12px 0; }
.tile { position: relative; width: 60px; height: 60px; padding-top: 5px; color: #fff; background: #949494; }
.tile > svg { margin: 0 auto 8px; position: relative; }
.tile .corner { position: absolute; right: 0; top: 0; margin: 0; }
.tile.on { outline: 1px solid #fff; outline-offset: 1px; }
.tile .pill { position: absolute; left: -2px; top: -10px; }
.links { display: flex; justify-content: space-between; padding: 19px 7px 0 6px; height: 40px; }
.links a { color: #1c4bb0; font-size: 12px; line-height: 14px; }
.feed { display: flex; flex: 1; padding: 0 3px 2px 2px; }
.msgs { flex: 1; background: #fff; }
.msg { display: flex; align-items: center; position: relative; padding: 12px 0 12px 4px; border-bottom: 1px solid #d0d0d0; background: #d7e4f2; }
.msg p { width: 273px; padding: 1px 0 0 6px; margin-bottom: -1px; white-space: nowrap; }
.msg time { font-weight: bold; }
.msg.read { background: #fff; border: 0; }
.msg.sel { color: #fff; background: #316ac5; border-bottom: 1px dotted #fff; }
.msg.read time, .msg.sel time { font-weight: normal; }
.dismiss { position: absolute; right: 4px; top: 13px; }
.marked { position: relative; }
.marked::after { content: ""; position: absolute; inset: -2px -6px -6px -3px; z-index: 2; border: 6px solid #d55245; border-radius: 3px; pointer-events: none; }
.vscroll { display: flex; flex-direction: column; align-items: center; width: 17px; background: linear-gradient(90deg, #c8c8c8, #eee 50%); }
.vscroll button { display: flex; align-items: center; justify-content: center; width: 16px; height: 17px; border: 1px solid #bbb; background: #f4f4f4; }
.knob { width: 14px; height: 15px; margin-top: 8px; border: 1px solid #555; border-radius: 50%; background: linear-gradient(90deg, #1f66d4, #7fd0ff); }
.vscroll .down { margin-top: auto; }

/* status bar */
.status { display: flex; align-items: center; height: 28px; padding: 0 11px 0 23px; border-top: 1px solid #444; background: linear-gradient(#bdbdbd, #999); }
.svc { display: flex; align-items: center; gap: 5px; margin-left: auto; padding-right: 8px; }
.host { padding: 2px 0 2px 8px; border-left: 1px solid #444; }

/* taskbar */
.taskbar { display: flex; height: 40px; background: #1c1c1c; color: #fff; font: 12px/19px "Open Sans", sans-serif; }
.start { width: 48px; display: flex; align-items: center; justify-content: center; }
.tsearch { display: flex; align-items: center; width: 288px; padding: 0 9px 0 12px; gap: 11px; background: #f2f2f2; border: 1px solid #bbb; color: #222; font-size: 14px; }
.tsearch input { flex: 1; min-width: 0; border: 0; padding: 0; background: none; }
.apps { display: flex; padding-left: 1px; }
.app { display: flex; align-items: center; justify-content: center; width: 49px; position: relative; }
.app.active { background: #4a4a4a; }
.app.run::after { content: ""; position: absolute; left: 4px; right: 4px; bottom: 0; height: 2px; background: #76b9ed; }
.app.run.active::after { left: 0; right: 0; }
.tray { display: flex; align-items: center; margin-left: auto; gap: 8px; }
.lang { margin-left: 2px; font-size: 12px; }
.clock { width: 64px; margin-right: 5px; text-align: center; }
.peek { width: 1px; height: 40px; margin: 0 3px 0 12px; background: #555; }
```
